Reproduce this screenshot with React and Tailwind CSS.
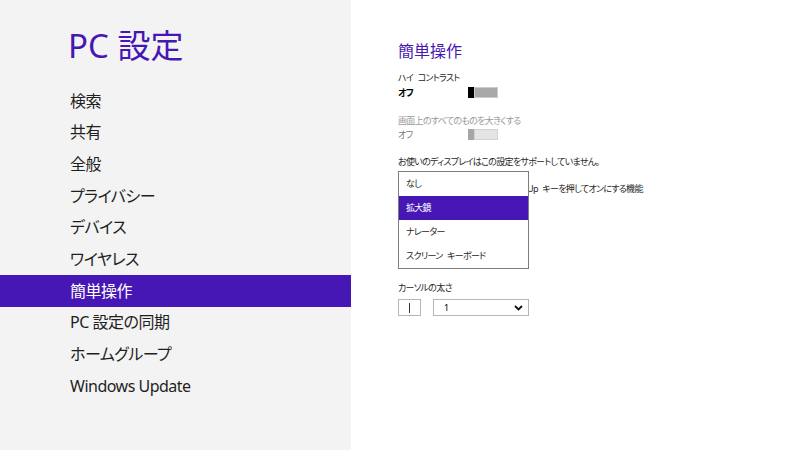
import React from 'react';

const font = "[font-family:'Noto_Sans','Noto_Sans_CJK_JP',sans-serif] [font-feature-settings:'palt']";

const navItems = [
  '検索',
  '共有',
  '全般',
  'プライバシー',
  'デバイス',
  'ワイヤレス',
  '簡単操作',
  'PC 設定の同期',
  'ホームグループ',
  'Windows Update',
];

const Toggle = ({ disabled }) => (
  <div className="flex h-[11px] w-[30px]">
    <div className={`w-[6px] h-full ${disabled ? 'bg-[#a6a6a6]' : 'bg-black'}`} />
    <div
      className={`flex-1 h-full border ${
        disabled ? 'bg-[#e4e4e4] border-[#d2d2d2]' : 'bg-[#a8a8a8] border-[#cccccc]'
      }`}
    />
  </div>
);

const App = () => {
  const active = '簡単操作';

  return (
    <div className={`flex h-[450px] w-[800px] bg-white overflow-hidden ${font}`}>
      {/* Left: navigation */}
      <div className="w-[351px] h-full bg-[#f3f3f3] flex flex-col">
        <h1 className="pl-[68px] pt-[24px] h-[85px] text-[33px] leading-[44px] text-[#4617b4]">PC 設定</h1>
        <nav className="flex flex-col">
          {navItems.map((item) => (
            <div
              key={item}
              className={`h-[31.67px] pl-[70px] flex items-center text-[16px] tracking-[-0.5px] ${
                item === active ? 'bg-[#4617b4] text-white' : 'text-[#1f1f1f]'
              }`}
            >
              {item}
            </div>
          ))}
        </nav>
      </div>

      {/* Right: settings */}
      <div className="relative flex-1 pl-[47px] pt-[41px] flex flex-col text-[9px] leading-[14px] tracking-[-0.7px] [word-spacing:3px] text-[#262626]">
        <h2 className="text-[16px] leading-[20px] tracking-normal text-[#4617b4]">簡単操作</h2>

        <div className="mt-[10px]">ハイ コントラスト</div>
        <div className="mt-[2px] flex items-center h-[11px]">
          <span className="w-[70px] font-bold text-black">オフ</span>
          <Toggle />
        </div>

        <div className="mt-[16px] text-[#9a9a9a]">画面上のすべてのものを大きくする</div>
        <div className="mt-[1px] flex items-center h-[11px]">
          <span className="w-[70px] text-[#7a7a7a]">オフ</span>
          <Toggle disabled />
        </div>

        <div className="mt-[15px]">お使いのディスプレイはこの設定をサポートしていません。</div>

        <div className="mt-[13px] whitespace-nowrap">
          <span className="ml-[129px]">Up キーを押してオンにする機能</span>
        </div>
        <div className="mt-[4px] h-[18px] w-[131px] border border-[#b5b5b5]" />

        <div className="mt-[63px]">カーソルの太さ</div>
        <div className="mt-[4px] flex items-center gap-[12px]">
          <div className="w-[23px] h-[17px] border border-[#b5b5b5] flex items-center justify-center">
            <div className="w-px h-[10px] bg-[#333]" />
          </div>
          <div className="w-[96px] h-[17px] border border-[#b5b5b5] flex items-center justify-between pl-[10px] pr-[5px] text-black">
            <span>1</span>
            <svg width="9" height="6" viewBox="0 0 9 6">
              <path d="M1 1 L4.5 4.5 L8 1" fill="none" stroke="#111" strokeWidth="1.8" />
            </svg>
          </div>
        </div>

        {/* Open dropdown list */}
        <div className="absolute left-[47px] top-[171px] w-[131px] bg-white border-[1.5px] border-[#7d7d7d] flex flex-col">
          {['なし', '拡大鏡', 'ナレーター', 'スクリーン キーボード'].map((opt) => (
            <div
              key={opt}
              className={`h-[24px] pl-[7px] flex items-center ${
                opt === '拡大鏡' ? 'bg-[#4617b4] text-white' : 'text-[#262626]'
              }`}
            >
              {opt}
            </div>
          ))}
        </div>
      </div>
    </div>
  );
};

export default App;
